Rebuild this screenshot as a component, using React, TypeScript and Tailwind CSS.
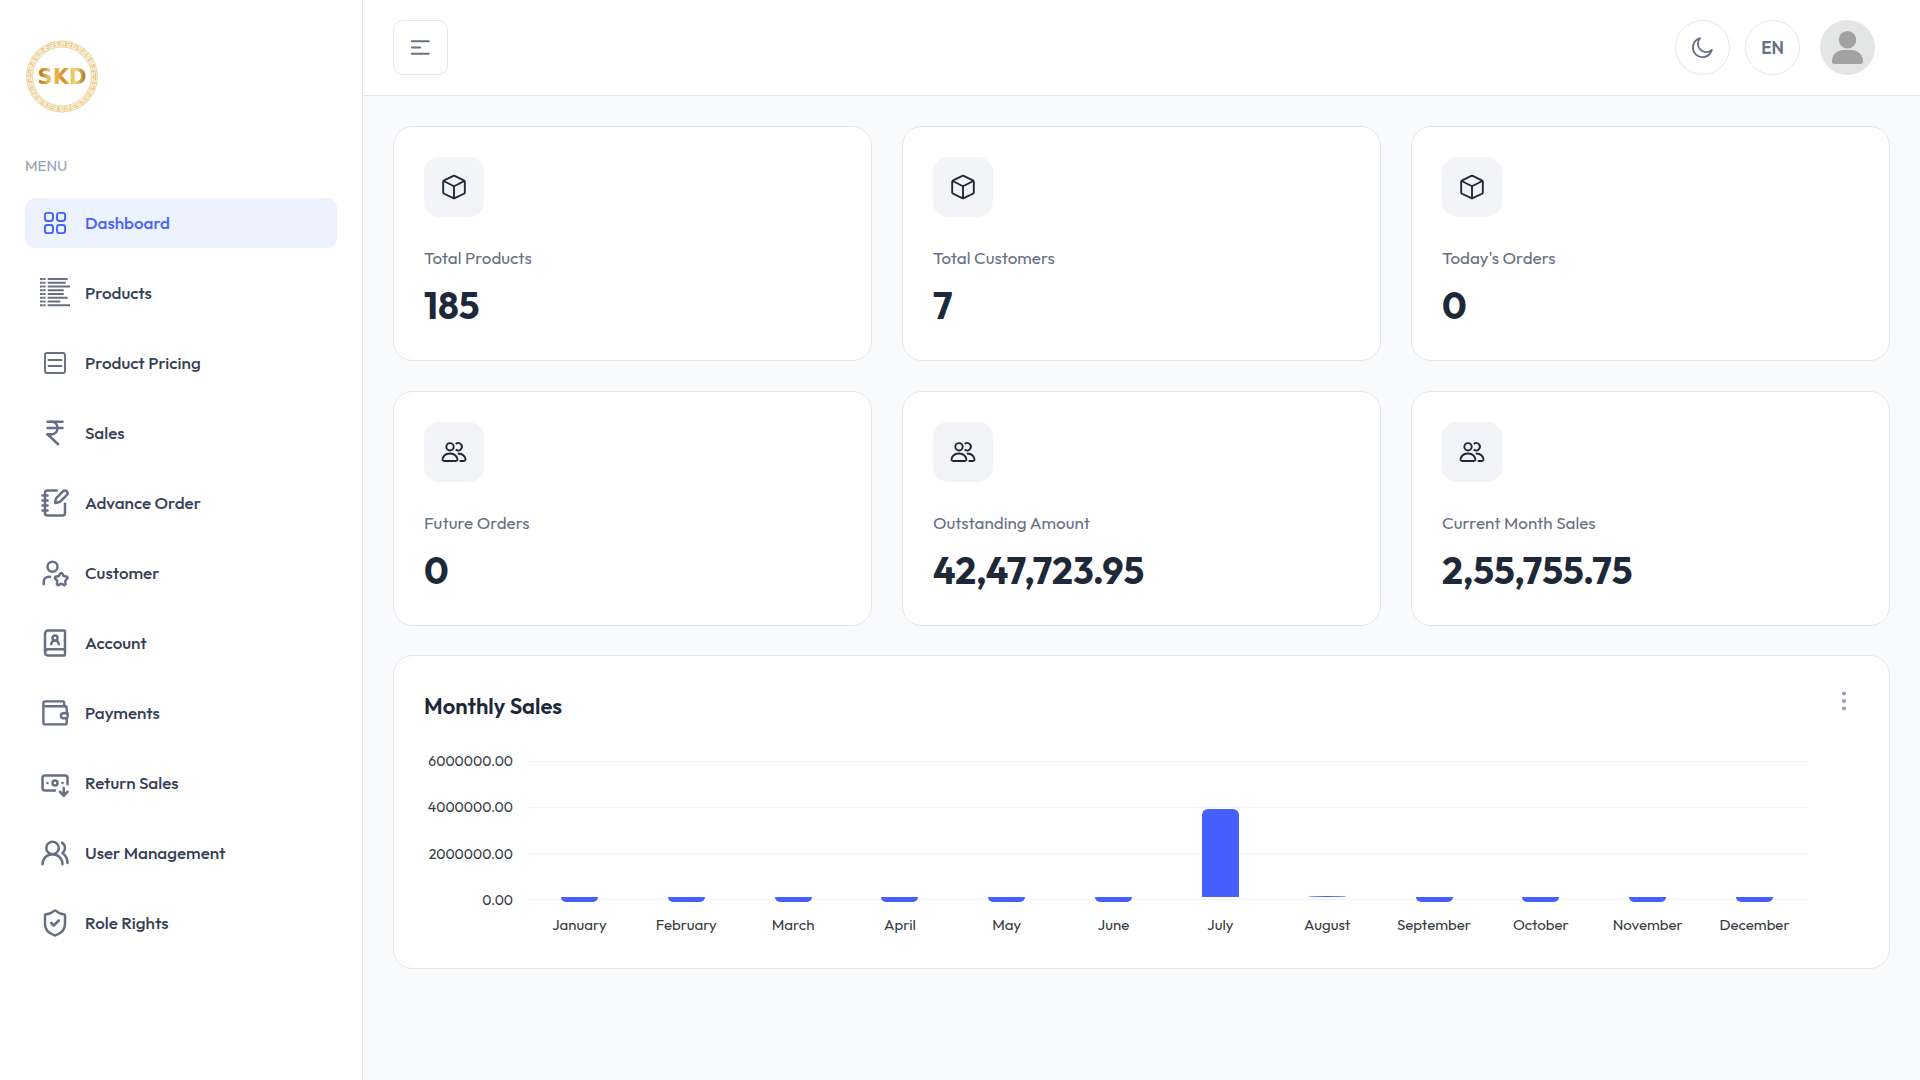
import type { ReactNode } from "react";
import {
  BanknoteArrowDown,
  BookUser,
  IndianRupee,
  NotebookPen,
  ShieldCheck,
  UserStar,
  UsersRound,
} from "lucide-react";

function GridIcon() {
  return (
    <svg width="30" height="30" viewBox="0 0 30 30" fill="none" stroke="currentColor" strokeWidth="1.9">
      <rect x="4.9" y="4.9" width="8.1" height="8.1" rx="2.4" />
      <rect x="17" y="4.9" width="8.1" height="8.1" rx="2.4" />
      <rect x="4.9" y="17" width="8.1" height="8.1" rx="2.4" />
      <rect x="17" y="17" width="8.1" height="8.1" rx="2.4" />
    </svg>
  );
}

function ListIcon() {
  const ends = [27.7, 25.7, 30, 23.7, 23.7, 27.7, 20.3, 30];
  return (
    <svg width="30" height="30" viewBox="0 0 30 30" fill="none" stroke="currentColor" strokeWidth="1.9">
      {ends.map((end, i) => (
        <path key={i} d={`M0 ${1 + i * 3.75}h2.8M3.2 ${1 + i * 3.75}h2.4M7.7 ${1 + i * 3.75}H${end}`} />
      ))}
    </svg>
  );
}

function PricingIcon() {
  return (
    <svg width="30" height="30" viewBox="0 0 30 30" fill="none" stroke="currentColor" strokeWidth="1.9">
      <rect x="5" y="5" width="20" height="20" rx="2" />
      <path d="M8.5 12h13M8.5 18h13" strokeLinecap="round" />
    </svg>
  );
}

function WalletIcon() {
  return (
    <svg width="30" height="30" viewBox="0 0 30 30" fill="none" stroke="currentColor" strokeWidth="2.4" strokeLinecap="round" strokeLinejoin="round">
      <path d="M24.2 8.3V5q0-1.6-1.6-1.6H5.2q-1.8 0-1.8 1.8v19.2q0 2 2 2h19.4q1.9 0 1.9-1.9v-4" />
      <path d="M26.7 15.2v-5q0-1.9-1.9-1.9H3.6" />
      <path d="M27.6 15.3h-4.2a2.5 2.5 0 0 0 0 5h2.6q1.6 0 1.6-1.6z" />
    </svg>
  );
}

function BoxIcon() {
  return (
    <svg width="30" height="30" viewBox="0 0 24 24" fill="none" stroke="currentColor" strokeWidth="1.5" strokeLinejoin="round">
      <path d="M11.5 3.1q.5-.25 1 0l7.4 3.6q.75.35.75 1.1v8.5q0 .75-.7 1.1l-7.4 3.5q-.55.25-1.1 0l-7.4-3.5q-.7-.35-.7-1.1V7.8q0-.75.75-1.1z" />
      <path d="M3.7 7.2 12 11.4l8.3-4.2M12 11.4v9.5" />
    </svg>
  );
}

function GroupIcon() {
  return (
    <svg width="30" height="30" viewBox="0 0 24 24" fill="none" stroke="currentColor" strokeWidth="1.5">
      <circle cx="8.8" cy="7.8" r="2.95" />
      <path d="M8.75 13.2c-2 0-3.5.6-4.4 1.6-.9.9-1.35 2-1.56 2.9-.22.8.5 1.45 1.3 1.45h9.35c.8 0 1.5-.65 1.3-1.45-.2-.9-.65-2-1.56-2.9-.9-1-2.4-1.6-4.4-1.6z" />
      <path d="M13.4 5.55a2.95 2.95 0 1 1 0 4.5M15 13.2c2.3 0 3.8.6 4.7 1.6.9.9 1.35 2 1.5 2.9.2.8-.5 1.45-1.3 1.45h-3.4" />
    </svg>
  );
}

function MoonIcon() {
  return (
    <svg width="25" height="25" viewBox="0 0 20 20" fill="none" stroke="currentColor" strokeWidth="1.5" strokeLinejoin="round">
      <path d="M17.45 11.97A7.71 7.71 0 1 1 8.03 2.55a6.67 6.67 0 0 0 9.42 9.42z" />
    </svg>
  );
}

function Logo() {
  return (
    <svg width="74" height="73" viewBox="0 0 74 73" role="img" aria-label="SKD">
      <defs>
        <linearGradient id="gold" x1="0" y1="0" x2="1" y2="0">
          <stop offset="0" stopColor="#a86a10" />
          <stop offset="0.28" stopColor="#f0cf70" />
          <stop offset="0.52" stopColor="#d98f1c" />
          <stop offset="0.78" stopColor="#f3d67c" />
          <stop offset="1" stopColor="#a5690f" />
        </linearGradient>
      </defs>
      <g fill="none">
        <circle cx="37" cy="36.5" r="32.5" stroke="#faf0da" strokeWidth="7" />
        <circle cx="37" cy="36.5" r="35.5" stroke="#efd9a6" />
        <circle cx="37" cy="36.5" r="29.5" stroke="#efd9a6" />
        <circle cx="37" cy="36.5" r="33.6" stroke="#e2bf80" strokeDasharray="4 2 1 2" />
        <circle cx="37" cy="36.5" r="31.6" stroke="#e5c68a" strokeDasharray="2 2 3 1" />
        <circle cx="37" cy="36.5" r="32.5" stroke="#e8cb90" strokeWidth="5" strokeDasharray="1 5" />
      </g>
      <text x="37" y="44" textAnchor="middle" fontFamily="DejaVu Sans" fontWeight="700" fontSize="21" fill="url(#gold)">
        SKD
      </text>
    </svg>
  );
}

const menu: { label: string; icon: ReactNode }[] = [
  { label: "Dashboard", icon: <GridIcon /> },
  { label: "Products", icon: <ListIcon /> },
  { label: "Product Pricing", icon: <PricingIcon /> },
  { label: "Sales", icon: <IndianRupee size={30} /> },
  { label: "Advance Order", icon: <NotebookPen size={30} /> },
  { label: "Customer", icon: <UserStar size={30} /> },
  { label: "Account", icon: <BookUser size={30} /> },
  { label: "Payments", icon: <WalletIcon /> },
  { label: "Return Sales", icon: <BanknoteArrowDown size={30} /> },
  { label: "User Management", icon: <UsersRound size={30} /> },
  { label: "Role Rights", icon: <ShieldCheck size={30} /> },
];

const stats = [
  { label: "Total Products", value: "185", icon: <BoxIcon /> },
  { label: "Total Customers", value: "7", icon: <BoxIcon /> },
  { label: "Today's Orders", value: "0", icon: <BoxIcon /> },
  { label: "Future Orders", value: "0", icon: <GroupIcon /> },
  { label: "Outstanding Amount", value: "42,47,723.95", icon: <GroupIcon /> },
  { label: "Current Month Sales", value: "2,55,755.75", icon: <GroupIcon /> },
];

const axisMax = 6000000;
const ticks = [6000000, 4000000, 2000000, 0];
const sales = [
  { month: "January", total: 0 },
  { month: "February", total: 0 },
  { month: "March", total: 0 },
  { month: "April", total: 0 },
  { month: "May", total: 0 },
  { month: "June", total: 0 },
  { month: "July", total: 3880000 },
  { month: "August", total: 45000 },
  { month: "September", total: 0 },
  { month: "October", total: 0 },
  { month: "November", total: 0 },
  { month: "December", total: 0 },
];

function Sidebar() {
  return (
    <aside className="w-[363px] shrink-0 border-r border-[#e4e7ec] bg-white px-[25px] pt-10">
      <a href="#" className="block w-fit">
        <Logo />
      </a>
      <h2 className="mt-10 text-[15px] leading-[25px] text-[#98a2b3]">MENU</h2>
      <nav className="mt-5">
        <ul className="flex flex-col gap-5">
          {menu.map((item, i) => (
            <li key={item.label}>
              <a
                href="#"
                className={
                  i === 0
                    ? "flex h-[50px] items-center gap-[15px] rounded-[10px] bg-[#ecf3ff] px-[15px] text-[17px] font-medium text-[#465fff]"
                    : "flex h-[50px] items-center gap-[15px] rounded-[10px] px-[15px] text-[17px] font-medium text-[#344054]"
                }
              >
                <span className={i === 0 ? "text-[#465fff]" : "text-[#667085]"}>{item.icon}</span>
                {item.label}
              </a>
            </li>
          ))}
        </ul>
      </nav>
    </aside>
  );
}

function Header() {
  return (
    <header className="flex h-24 items-center justify-between border-b border-[#e4e7ec] bg-white pr-[45px] pl-[30px]">
      <button
        type="button"
        aria-label="Toggle sidebar"
        className="flex size-[55px] items-center justify-center rounded-[10px] border border-[#e4e7ec] text-[#667085]"
      >
        <svg width="21" height="15" viewBox="0 0 21 15" stroke="currentColor" strokeWidth="1.9" strokeLinecap="round">
          <path d="M1.8 1.3h17M1.8 7.5h8.4M1.8 13.7h17" />
        </svg>
      </button>
      <div className="flex items-center gap-5">
        <div className="flex items-center gap-[15px]">
          <button
            type="button"
            aria-label="Toggle theme"
            className="flex size-[55px] items-center justify-center rounded-full border border-[#e4e7ec] text-[#667085]"
          >
            <MoonIcon />
          </button>
          <button
            type="button"
            className="flex size-[55px] items-center justify-center rounded-full border border-[#e4e7ec] text-[17px] font-semibold text-[#667085]"
          >
            EN
          </button>
        </div>
        <button type="button" aria-label="Account" className="size-[55px] overflow-hidden rounded-full bg-[#e4e6e6]">
          <svg width="55" height="55" viewBox="0 0 55 55" fill="#a2a2a2">
            <circle cx="27.5" cy="19.7" r="8.8" />
            <path d="M12 41.5C12 34 17.5 30 23.5 30h8C37.500 30 43 34.500 43 41.500Q43 44 40.500 44h-26Q12 44 12 41.500z" />
          </svg>
        </button>
      </div>
    </header>
  );
}

function StatCard({ label, value, icon }: { label: string; value: string; icon: ReactNode }) {
  return (
    <div className="rounded-[20px] border border-[#e4e7ec] bg-white p-[30px]">
      <div className="flex size-[60px] items-center justify-center rounded-[15px] bg-[#f2f4f7] text-[#1d2939]">
        {icon}
      </div>
      <p className="mt-[26px] text-[17px] leading-[30px] text-[#667085]">{label}</p>
      <p className="mt-[9px] text-[37px] leading-[48px] font-bold text-[#1d2939]">{value}</p>
    </div>
  );
}

function MonthlySales() {
  return (
    <section className="rounded-[20px] border border-[#e4e7ec] bg-white px-[30px] pt-[30px] pb-[33px]">
      <div className="flex items-start justify-between">
        <h3 className="text-[22px] leading-10 font-semibold text-[#1d2939]">Monthly Sales</h3>
        <button type="button" aria-label="More" className="flex size-[30px] items-center justify-center text-[#98a2b3]">
          <svg width="30" height="30" viewBox="0 0 30 30" fill="currentColor">
            <circle cx="15" cy="7.5" r="2.1" />
            <circle cx="15" cy="15" r="2.1" />
            <circle cx="15" cy="22.5" r="2.1" />
          </svg>
        </button>
      </div>
      <div className="mt-[27px] flex gap-[13px] pr-[51px] text-[15px] text-[#373d3f]">
        <div className="flex h-[155px] w-[89px] flex-col justify-between text-right text-[14px] leading-4">
          {ticks.map((t) => (
            <span key={t}>{t.toFixed(2)}</span>
          ))}
        </div>
        <div className="flex-1 pt-2">
          <div className="grid">
            <div className="col-start-1 row-start-1 flex h-[139px] flex-col justify-between">
              {ticks.map((t) => (
                <div key={t} className="h-px bg-[#f2f4f7]" />
              ))}
            </div>
            {/* months without sales hang as a small stub below the baseline */}
            <div className="col-start-1 row-start-1 grid grid-cols-12">
              {sales.map((s) => (
                <div key={s.month} className="flex flex-col items-center">
                  <div className="flex h-[136px] w-[37px] items-end">
                    <div
                      className={s.total > 500000 ? "w-full rounded-t-[6px] bg-[#465fff]" : "w-full rounded-t-[50%] bg-[#465fff]"}
                      style={{ height: `${(s.total / axisMax) * 100}%` }}
                    />
                  </div>
                  <div className={s.total ? "h-[5px]" : "h-[5px] w-[37px] rounded-b-[6px] bg-[#465fff]"} />
                </div>
              ))}
            </div>
          </div>
          <div className="mt-[13px] grid grid-cols-12 text-center leading-5">
            {sales.map((s) => (
              <span key={s.month}>{s.month}</span>
            ))}
          </div>
        </div>
      </div>
    </section>
  );
}

export default function App() {
  return (
    <div className="flex min-h-screen bg-[#f9fafb] font-['Outfit','Lato',sans-serif]">
      <Sidebar />
      <div className="min-w-0 flex-1">
        <Header />
        <main className="grid gap-[29px] p-[30px]">
          <div className="grid grid-cols-3 gap-[30px]">
            {stats.map((s) => (
              <StatCard key={s.label} {...s} />
            ))}
          </div>
          <MonthlySales />
        </main>
      </div>
    </div>
  );
}
